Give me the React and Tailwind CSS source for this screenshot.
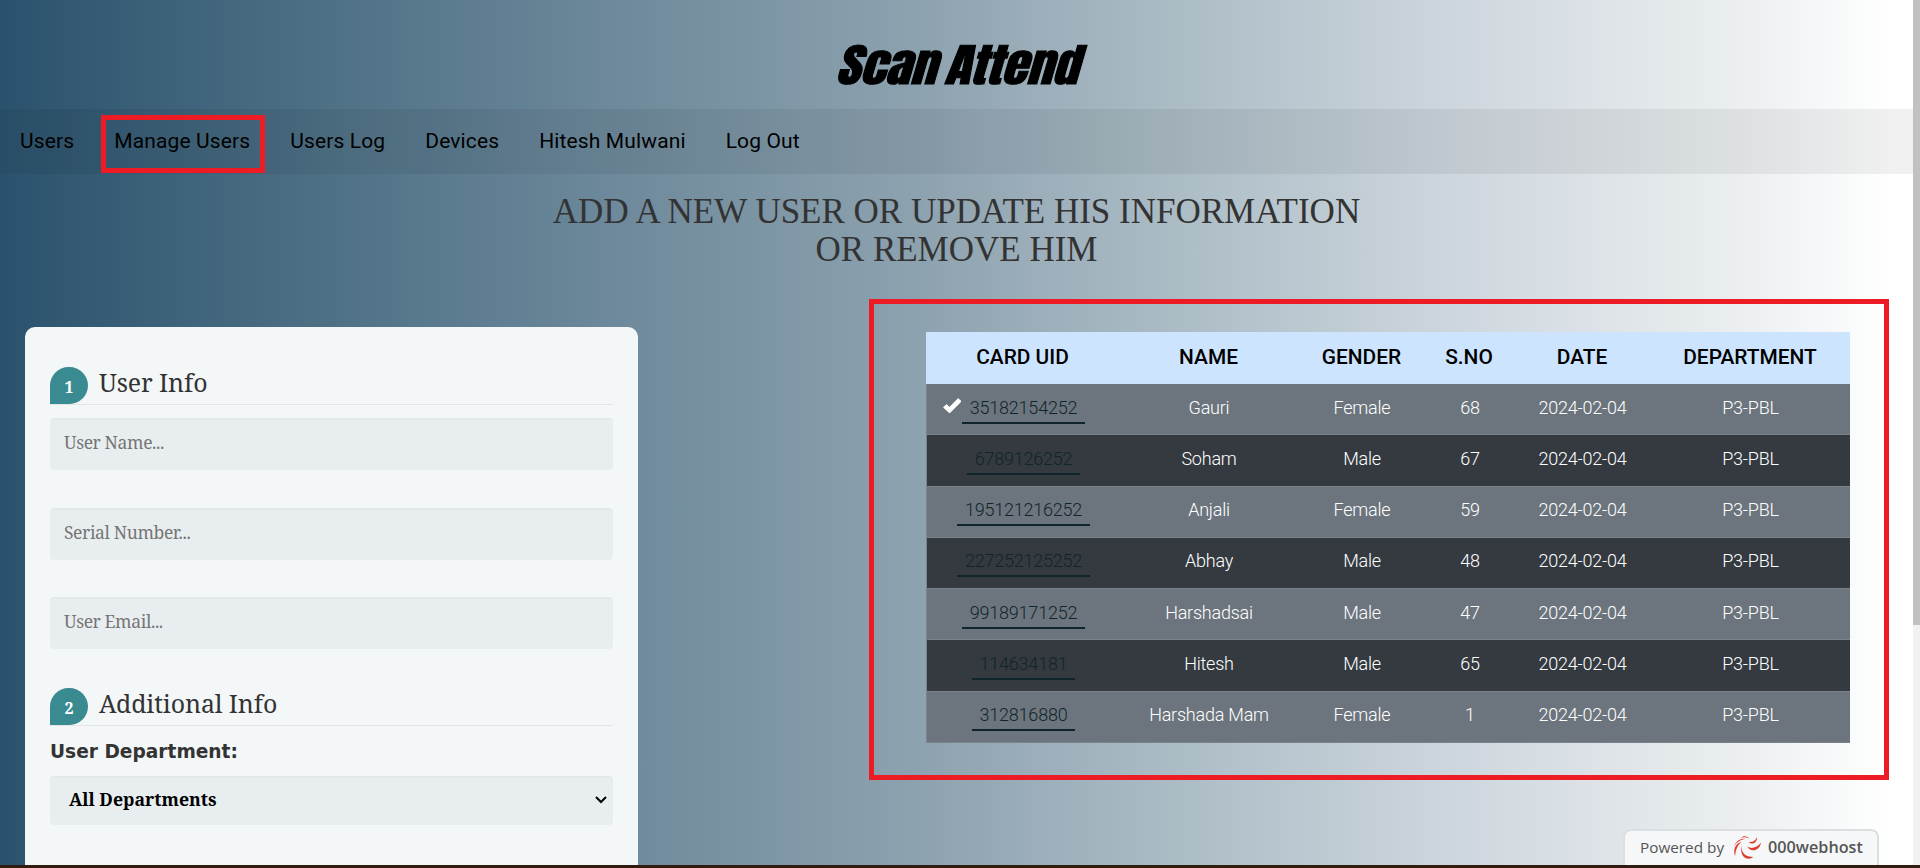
const rows = [
  ["35182154252", "Gauri", "Female", "68"],
  ["6789126252", "Soham", "Male", "67"],
  ["195121216252", "Anjali", "Female", "59"],
  ["227252125252", "Abhay", "Male", "48"],
  ["99189171252", "Harshadsai", "Male", "47"],
  ["114634181", "Hitesh", "Male", "65"],
  ["312816880", "Harshada Mam", "Female", "1"],
];

const cols = "grid grid-cols-[193px_179px_127px_88px_138px_198px]";

function NavItem({ children }) {
  return <a className="block whitespace-nowrap px-5 pt-[19px] tracking-[0.13px]">{children}</a>;
}

function Legend({ number, children }) {
  return (
    <div className="flex h-[38px] items-end border-b border-[#e5e5e5]">
      <span className="flex h-[37px] w-[38px] items-center justify-center rounded-full rounded-bl-none bg-[#3a8a92] pt-[2px] font-[Noto_Serif,DejaVu_Serif,serif] text-[16px] font-bold text-white">
        {number}
      </span>
      <span className="ml-[11px] pb-[3px] text-[24.9px] leading-[37px] tracking-[-0.1px] text-[#333]">{children}</span>
    </div>
  );
}

function Field({ placeholder }) {
  return (
    <input
      placeholder={placeholder}
      className="mb-[37.5px] block h-[52px] w-full rounded bg-[#e8eeef] px-[14px] pb-[4px] text-[17.5px] tracking-[-0.4px] shadow-[0_2px_0_rgba(0,0,0,0.02)_inset] placeholder:text-[#757575]"
    />
  );
}

function Check() {
  return (
    <svg className="absolute top-[7px] left-[15.5px]" width="18.5" height="15.5" viewBox="0 0 18 15" fill="#fff">
      <path d="M0.4 8.6L3 6.2Q3.4 5.9 3.8 6.2L6.3 8.8L14.3 0.4Q14.7 0 15.1 0.4L17.7 2.8Q18.1 3.2 17.7 3.6L6.8 14.6Q6.4 15 6 14.6L0.4 9.4Q0 9 0.4 8.6Z" />
    </svg>
  );
}

export default function App() {
  return (
    <div className="flex h-[868px] w-[1920px] flex-col overflow-hidden bg-[#301d10] font-[Roboto,sans-serif]">
      <div className="flex h-[865px]">
        <div className="relative h-full w-[1913px] overflow-hidden bg-[linear-gradient(90deg,#2b526d_0%,#4e7085_17%,#6d899b_32%,#8da2af_48%,#afbfc8_63%,#d0d8df_77%,#e9edef_90%,#ffffff_99%)]">
          <header className="flex h-[109px] justify-center pt-[32px]">
            <h1 className="origin-center scale-x-[1.16] font-[Impact,Anton,Liberation_Sans_Narrow,sans-serif] text-[45px] leading-[66px] font-normal tracking-[-0.2px] italic [-webkit-text-stroke:1px_black] [word-spacing:-3px]">
              Scan Attend
            </h1>
          </header>
          <nav className="flex h-[65px] bg-black/[0.06] text-[21px] leading-[26px] text-black">
            <NavItem>Users</NavItem>
            <NavItem>Manage Users</NavItem>
            <NavItem>Users Log</NavItem>
            <NavItem>Devices</NavItem>
            <NavItem>Hitesh Mulwani</NavItem>
            <NavItem>Log Out</NavItem>
          </nav>
          <h2 className="pt-[19px] text-center font-[Liberation_Serif,serif] text-[35px] leading-[38px] text-[#333]">
            ADD A NEW USER OR UPDATE HIS INFORMATION
            <br />
            OR REMOVE HIM
          </h2>
          <main className="mt-[58px] flex items-start">
            <form className="ml-[25px] h-[700px] w-[613px] rounded-[10px] bg-[#f4f7f8] px-[25px] pt-[40px] font-[Noto_Serif,Liberation_Serif,serif]">
              <Legend number="1">User Info</Legend>
              <div className="h-[13px]" />
              <Field placeholder="User Name..." />
              <Field placeholder="Serial Number..." />
              <Field placeholder="User Email..." />
              <div className="h-[1.5px]" />
              <Legend number="2">Additional Info</Legend>
              <label className="mt-[12px] mb-[9.5px] block font-[DejaVu_Sans,sans-serif] text-[18.6px] leading-7 font-bold text-[#333]">
                User Department:
              </label>
              <div className="flex h-[49px] items-center justify-between rounded bg-[#e8eeef] pr-[6px] pb-[2px] pl-[19px] text-[17.7px] font-bold text-black shadow-[0_2px_0_rgba(0,0,0,0.02)_inset]">
                <span>All Departments</span>
                <svg className="mt-[2px]" width="12" height="8" viewBox="0 0 12 8" fill="none" stroke="#000" strokeWidth="2">
                  <path d="M1 1l5 5 5-5" />
                </svg>
              </div>
            </form>
            <section className="mt-[-28px] ml-[231px] h-[481px] w-[1020px] border-[5px] border-[#ed1c24] pt-[28px] pl-[52px]">
              <div className={`${cols} h-[52px] w-[924px] items-center bg-[#cde4ff] text-center text-[20.9px] font-medium text-black`}>
                <span>CARD UID</span>
                <span>NAME</span>
                <span>GENDER</span>
                <span>S.NO</span>
                <span>DATE</span>
                <span>DEPARTMENT</span>
              </div>
              {rows.map(([uid, name, gender, serial], i) => (
                <div
                  key={uid}
                  className={`${cols} h-[51.25px] w-[924px] items-center border-l border-b border-[#7b838a] pb-1 text-center text-[18px] font-light tracking-[-0.22px] text-white ${i % 2 ? "bg-[#343a40]" : "bg-[#6c757d]"}`}
                >
                  <span className="relative flex justify-center pt-[3px]">
                    {i === 0 && <Check />}
                    <span className="border-b-2 border-[#10252b] px-[7.5px] pb-px text-[#10252b]">{uid}</span>
                  </span>
                  <span className="pr-px">{name}</span>
                  <span className="pr-px">{gender}</span>
                  <span>{serial}</span>
                  <span className="pr-px">2024-02-04</span>
                  <span className="pr-px">P3-PBL</span>
                </div>
              ))}
            </section>
          </main>
          <div className="absolute top-[115px] left-[101px] h-[58px] w-[164px] border-[5px] border-[#ed1c24]" />
          <div className="absolute right-[34px] bottom-0 flex h-[36px] w-[256px] items-center rounded-t-lg border-2 border-b-0 border-[#dcdfe1] bg-[#f5f7f8] pb-[2px] pl-[15px] font-[Open_Sans,sans-serif] text-[15.3px] text-[#555]">
            <span>Powered by</span>
            <svg className="ml-[9px] mr-[6px]" width="29" height="25" viewBox="0 0 30 26" fill="#e03a2c">
              <path d="M9 10C8 18 12 23 21 23C16 27 6 24 9 10Z" />
              <path d="M15 12C19 15 25 13 29 8C28 16 18 19 15 12Z" />
              <path d="M16 7C20 8 23 6 25 2C25 8 20 11 16 7Z" />
              <path d="M2 22C0 15 2 9 9 7C5 10 3 14 2 22Z" />
              <path d="M1 12C3 6 8 3 13 4C8 5 4 7 1 12Z" />
              <path d="M8 3C11 0 15 1 17 4C14 2 11 2 8 3Z" />
            </svg>
            <span className="text-[16.2px] font-semibold">000webhost</span>
          </div>
        </div>
        <div className="w-[7px] bg-[#f1f1f1]">
          <div className="h-[625px] bg-[#c1c1c1]" />
        </div>
      </div>
    </div>
  );
}
